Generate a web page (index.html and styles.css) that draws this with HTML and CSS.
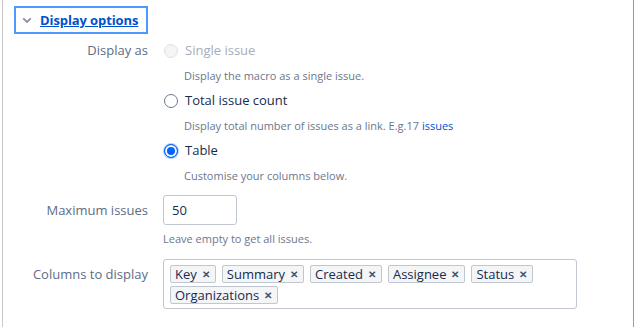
FILE: index.html
```html
<!DOCTYPE html>
<html>
<head>
<meta charset="utf-8">
<link rel="stylesheet" href="styles.css">
</head>
<body>
<div class="panel">
  <div class="header">
    <a class="toggle" href="#">
      <svg class="chev" width="10" height="7" viewBox="0 0 10 7"><path d="M1.2 1.3 L5 5 L8.8 1.3" fill="none" stroke="#8993a4" stroke-width="1.8"/></svg>
      <span class="toggle-text">Display options</span>
    </a>
  </div>
  <div class="form">
    <div class="label label-top">Display as</div>
    <div class="field">
      <div class="option disabled"><span class="radio radio-disabled"></span>Single issue</div>
      <div class="desc">Display the macro as a single issue.</div>
      <div class="option"><span class="radio"></span>Total issue count</div>
      <div class="desc">Display total number of issues as a link. E.g.17 <a class="link" href="#">issues</a></div>
      <div class="option"><span class="radio radio-checked"></span>Table</div>
      <div class="desc">Customise your columns below.</div>
    </div>

    <div class="label label-input">Maximum issues</div>
    <div class="field field-input">
      <div class="input">50</div>
      <div class="desc">Leave empty to get all issues.</div>
    </div>

    <div class="label label-tags">Columns to display</div>
    <div class="field field-tags">
      <div class="tags">
        <span class="tag">Key<span class="x">✕</span></span>
        <span class="tag">Summary<span class="x">✕</span></span>
        <span class="tag">Created<span class="x">✕</span></span>
        <span class="tag">Assignee<span class="x">✕</span></span>
        <span class="tag">Status<span class="x">✕</span></span>
        <span class="tag">Organizations<span class="x">✕</span></span>
      </div>
    </div>
  </div>
</div>
</body>
</html>
```
FILE: styles.css
```css
html, body {
  margin: 0;
  padding: 0;
  background: #ffffff;
}
body {
  font-family: "Open Sans", "Noto Sans", sans-serif;
  font-size: 13px;
  color: #172b4d;
}
.panel {
  margin-left: 2px;
  width: 630px;
  height: 327px;
  border-left: 1px solid #c8c8c8;
  border-right: 1px solid #9a9a9a;
  box-sizing: content-box;
}
.header {
  padding: 6px 0 0 11px;
  height: 32px;
  box-sizing: border-box;
}
.toggle {
  display: inline-flex;
  align-items: center;
  height: 28px;
  width: 134px;
  box-sizing: border-box;
  border: 2px solid #4c9aff;
  padding-left: 6px;
  text-decoration: none;
}
.chev {
  margin-right: 8px;
  margin-top: 1px;
}
.toggle-text {
  font-weight: 700;
  font-size: 13px;
  color: #0052cc;
  text-decoration: underline;
  letter-spacing: -0.1px;
}
.form {
  display: grid;
  grid-template-columns: 145px 1fr;
  column-gap: 15px;
  margin-top: 6px;
}
.label {
  text-align: right;
  color: #5e6c84;
  line-height: 24px;
  white-space: nowrap;
}
.field {
  display: flex;
  flex-direction: column;
}
.option {
  display: flex;
  align-items: center;
  height: 25px;
  line-height: 25px;
  color: #172b4d;
}
.option.disabled {
  color: #a5adba;
}
.radio {
  width: 12px;
  height: 12px;
  border: 1.5px solid #6b778c;
  border-radius: 50%;
  margin-right: 7px;
  margin-left: 1px;
  box-sizing: content-box;
}
.radio-disabled {
  border-color: #dfe1e6;
  background: #f4f5f7;
}
.radio-checked {
  border: 1.5px solid #0065ff;
  background: #0065ff;
  box-shadow: inset 0 0 0 2px #ffffff, 0 0 0 1px #b3d4ff;
}
.desc {
  height: 25px;
  line-height: 25px;
  font-size: 11px;
  color: #6b778c;
  padding-left: 21px;
  white-space: nowrap;
}
.field-input .desc,
.field-tags .desc {
  padding-left: 0;
}
.link {
  color: #0052cc;
  text-decoration: none;
}
.label-input {
  margin-top: 7px;
  line-height: 30px;
}
.field-input {
  margin-top: 7px;
}
.input {
  width: 74px;
  height: 30px;
  box-sizing: border-box;
  border: 1px solid #c1c7d0;
  border-radius: 3px;
  padding-left: 8px;
  line-height: 28px;
  color: #172b4d;
}
.field-input .desc {
  height: 28px;
  line-height: 28px;
}
.label-tags {
  margin-top: 6px;
  line-height: 18px;
  padding-top: 6px;
}
.field-tags {
  margin-top: 6px;
}
.tags {
  width: 414px;
  height: 50px;
  box-sizing: border-box;
  border: 1px solid #c1c7d0;
  border-radius: 3px;
  padding: 5px 6px;
  display: flex;
  flex-wrap: wrap;
  align-content: flex-start;
  gap: 3px 6px;
}
.tag {
  display: inline-flex;
  align-items: center;
  height: 18px;
  box-sizing: border-box;
  border: 1px solid #c1c7d0;
  border-radius: 2px;
  background: #f4f5f7;
  padding: 0 5px 0 4px;
  font-size: 13px;
  color: #172b4d;
}
.x {
  font-size: 10px;
  font-weight: 700;
  margin-left: 5px;
  color: #42526e;
}
```
